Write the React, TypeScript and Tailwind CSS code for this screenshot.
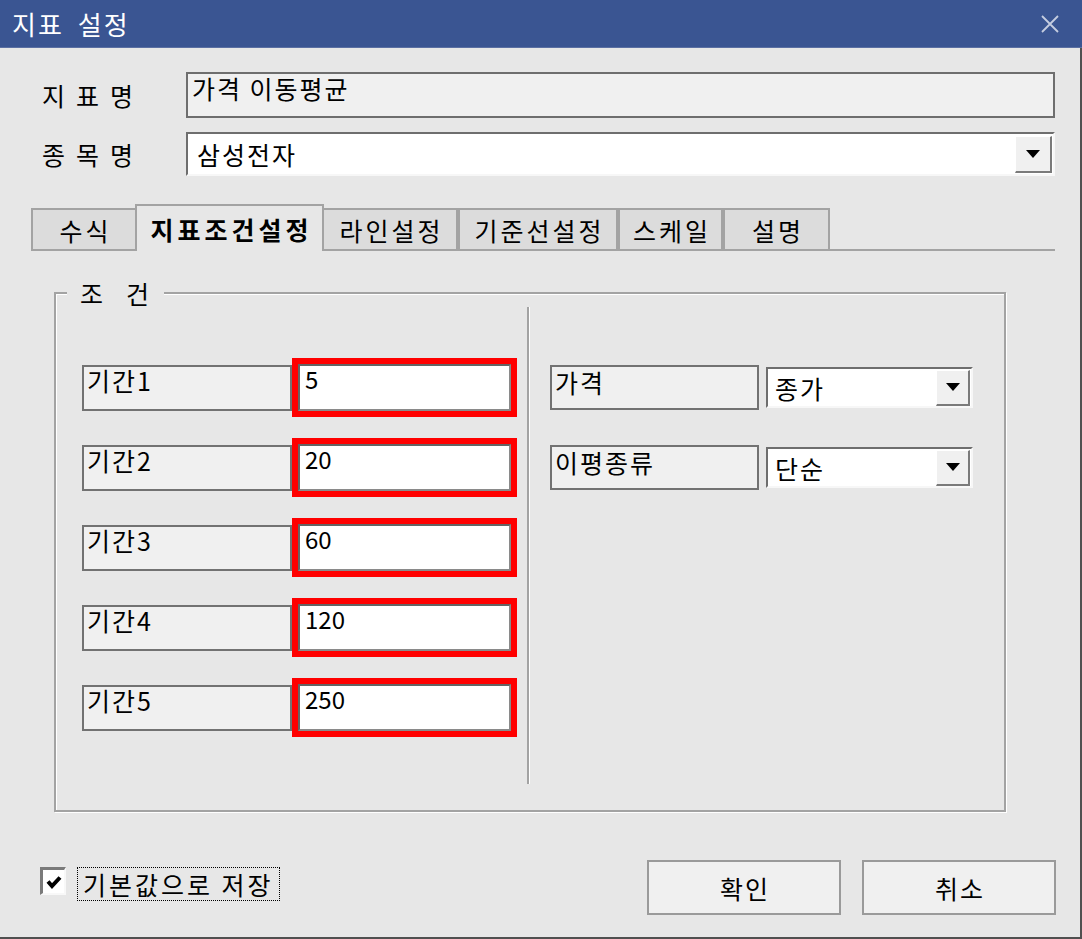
import React from "react";

function Tri() {
  return (
    <svg width="14" height="8" viewBox="0 0 14 8">
      <polygon points="0,0 14,0 7,8" fill="#000" />
    </svg>
  );
}

function SmallCombo({ value }: { value: string }) {
  return (
    <div className="flex h-[41px] w-[207px] items-center border-2 border-t-[#6e6e6e] border-l-[#6e6e6e] border-r-[#f7f7f7] border-b-[#f7f7f7] bg-white">
      <span className="flex-1 pl-[7px] text-[25px] leading-[26px] tracking-[2px]">{value}</span>
      <div className="mr-[1px] flex h-[36px] w-[34px] items-center justify-center border-t border-l border-r-2 border-b-2 border-t-white border-l-white border-r-[#7a7a7a] border-b-[#7a7a7a] bg-[#f0f0f0]">
        <Tri />
      </div>
    </div>
  );
}

function PeriodRow({ label, value }: { label: string; value: string }) {
  return (
    <div className="flex h-[59px] items-center">
      <div className="h-[46px] w-[210px] border-2 border-[#727272] bg-[#f0f0f0] pl-[3px] text-[25px] leading-[26px] tracking-[2px]">
        {label}
      </div>
      <div className="h-[59px] w-[225px] border-[6px] border-[#ff0000]">
        <div className="h-full w-full border-2 border-t-[#646464] border-l-[#646464] border-r-[#8a8a8a] border-b-[#8a8a8a] bg-white pl-[5px] text-[24px] leading-[26px]">
          {value}
        </div>
      </div>
    </div>
  );
}

function RightRow({ label, value }: { label: string; value: string }) {
  return (
    <div className="flex h-[59px] items-center gap-[7px]">
      <div className="h-[45px] w-[209px] border-2 border-[#727272] bg-[#f0f0f0] pl-[3px] pt-[2px] text-[25px] leading-[26px] tracking-[2px]">
        {label}
      </div>
      <SmallCombo value={value} />
    </div>
  );
}

function Spaced({ chars }: { chars: string[] }) {
  return (
    <div className="flex gap-[11px] text-[25px] leading-[26px]">
      {chars.map((c, i) => (
        <span key={i}>{c}</span>
      ))}
    </div>
  );
}

const tabs = [
  { t: "수식", w: "w-[106px]" },
  { t: "지표조건설정", w: "w-[189px]", sel: true },
  { t: "라인설정", w: "w-[136px]" },
  { t: "기준선설정", w: "w-[160px]" },
  { t: "스케일", w: "w-[105px]" },
  { t: "설명", w: "w-[107px]" },
];

export default function App() {
  return (
    <div className="h-[939px] w-[1082px] overflow-hidden bg-[#e7e7e7] text-black [font-family:'Noto_Sans_CJK_KR','Noto_Sans',sans-serif]">
      {/* Title bar */}
      <div className="flex h-[48px] items-center justify-between border-b border-b-[#5b70a3] bg-[#3a5592] pl-[12px] pr-[23px]">
        <div className="flex gap-[14px] text-[26px] leading-[28px] tracking-[2px] text-white">
          <span>지표</span>
          <span>설정</span>
        </div>
        <svg width="18" height="18" viewBox="0 0 18 18">
          <path d="M1 1 L17 17 M17 1 L1 17" stroke="#c5cde0" strokeWidth="1.8" fill="none" />
        </svg>
      </div>

      {/* Body */}
      <div className="flex h-[891px] flex-col border-r-2 border-b-2 border-r-[#505050] border-b-[#505050]">
        {/* Row 1 */}
        <div className="ml-[42px] mt-[24px] flex items-center">
          <div className="w-[144px]">
            <Spaced chars={["지", "표", "명"]} />
          </div>
          <div className="h-[46px] w-[869px] border-2 border-[#6e6e6e] bg-[#f0f0f0] pl-[4px] pt-[1px] text-[25px] leading-[26px] tracking-[2px]">
            가격 이동평균
          </div>
        </div>

        {/* Row 2 */}
        <div className="ml-[42px] mt-[14px] flex items-center">
          <div className="w-[144px]">
            <Spaced chars={["종", "목", "명"]} />
          </div>
          <div className="flex h-[44px] w-[869px] items-center border-2 border-t-[#6e6e6e] border-l-[#6e6e6e] border-r-[#f7f7f7] border-b-[#f7f7f7] bg-white">
            <span className="flex-1 pl-[9px] text-[25px] leading-[26px] tracking-[2px]">삼성전자</span>
            <div className="mr-[1px] flex h-[37px] w-[37px] items-center justify-center border-t border-l border-r-2 border-b-2 border-t-white border-l-white border-r-[#7a7a7a] border-b-[#7a7a7a] bg-[#f0f0f0]">
              <Tri />
            </div>
          </div>
        </div>

        {/* Tabs */}
        <div className="ml-[31px] mt-[30px] flex h-[45px] w-[1024px] items-end border-b-2 border-b-[#a3a3a3]">
          {tabs.map((tab) =>
            tab.sel ? (
              <div
                key={tab.t}
                className={`${tab.w} relative z-10 -mb-[2px] -ml-[2px] -mr-[2px] flex h-[47px] items-center justify-center border-2 border-b-0 border-[#a3a3a3] bg-[#e7e7e7] pl-[4px] text-[25px] font-bold leading-[28px] tracking-[4px]`}
              >
                {tab.t}
              </div>
            ) : (
              <div
                key={tab.t}
                className={`${tab.w} flex h-[41px] items-center justify-center border-2 border-b-0 border-[#a3a3a3] bg-[#dcdcdc] pl-[3px] text-[25px] leading-[26px] tracking-[3px]`}
              >
                {tab.t}
              </div>
            )
          )}
        </div>

        {/* Group box */}
        <div className="ml-[54px] mt-[41px] flex h-[520px] w-[952px] flex-col border-2 border-[#a3a3a3] shadow-[1px_1px_0_#ffffff,inset_1px_1px_0_#ffffff]">
          <div className="-mt-[14px] ml-[11px] flex w-fit gap-[23px] bg-[#e7e7e7] pl-[13px] pr-[15px] text-[25px] leading-[26px]">
            <span>조</span>
            <span>건</span>
          </div>
          <div className="mt-[1px] flex h-[477px]">
            <div className="flex w-[471px] flex-col gap-[21px] pl-[26px] pt-[51px]">
              <PeriodRow label="기간1" value="5" />
              <PeriodRow label="기간2" value="20" />
              <PeriodRow label="기간3" value="60" />
              <PeriodRow label="기간4" value="120" />
              <PeriodRow label="기간5" value="250" />
            </div>
            <div className="w-[3px] border-l-2 border-r border-l-[#a3a3a3] border-r-white" />
            <div className="flex flex-col gap-[21px] pl-[20px] pt-[51px]">
              <RightRow label="가격" value="종가" />
              <RightRow label="이평종류" value="단순" />
            </div>
          </div>
        </div>

        {/* Bottom row */}
        <div className="mt-[48px] flex h-[55px]">
          <div className="ml-[40px] mt-[7px] flex items-start gap-[11px]">
            <div className="flex h-[28px] w-[26px] items-center justify-center border-t-[3px] border-l-[3px] border-r-2 border-b-2 border-t-[#7a7a7a] border-l-[#7a7a7a] border-r-[#f8f8f8] border-b-[#f8f8f8] bg-white">
              <svg width="16" height="14" viewBox="0 0 16 14">
                <path d="M2 6.5 L6 11 L14 2.5" stroke="#000" strokeWidth="4" fill="none" />
              </svg>
            </div>
            <div className="h-[34px] border border-dotted border-black px-[5px] text-[25px] leading-[32px] tracking-[3px]">
              기본값으로 저장
            </div>
          </div>
          <div className="ml-auto mr-[24px] flex gap-[21px]">
            <div className="flex h-[55px] w-[194px] items-center justify-center border-2 border-[#9a9a9a] bg-[#f0f0f0] pl-[2px] text-[25px] leading-[26px] tracking-[2px]">
              확인
            </div>
            <div className="flex h-[55px] w-[194px] items-center justify-center border-2 border-[#9a9a9a] bg-[#f0f0f0] pl-[2px] text-[25px] leading-[26px] tracking-[2px]">
              취소
            </div>
          </div>
        </div>
      </div>
    </div>
  );
}
